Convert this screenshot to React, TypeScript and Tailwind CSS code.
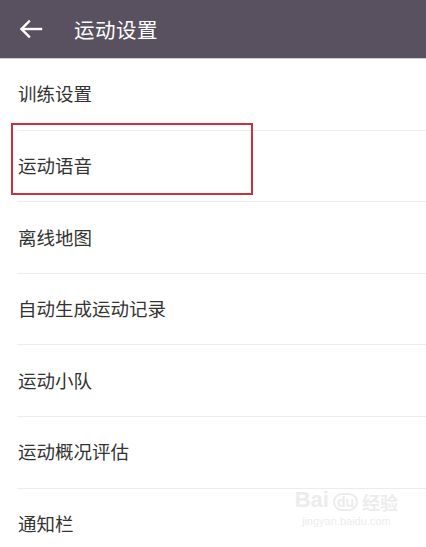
const items = ['训练设置', '运动语音', '离线地图', '自动生成运动记录', '运动小队', '运动概况评估', '通知栏'];

export default function App() {
  return (
    <div className="w-[426px] h-[547px] overflow-hidden bg-white" style={{ fontFamily: '"Noto Sans CJK SC", "Noto Sans", sans-serif' }}>
      {/* Header */}
      <div className="h-[59px] bg-[#595160] flex items-center border-b border-[#cfcdd2]">
        <svg width="24" height="20" viewBox="0 0 24 20" className="ml-[19px]" fill="none" stroke="white" strokeWidth="2.4" strokeLinecap="square">
          <path d="M22 10H3" />
          <path d="M10 2.5L2.5 10L10 17.5" />
        </svg>
        <span className="ml-[31px] text-[20.5px] text-white tracking-[0.5px]">运动设置</span>
      </div>

      {/* List */}
      <div className="relative">
        {items.map((label, i) => (
          <div key={label} className="relative">
            {i > 0 && <div className="ml-[17px] h-px bg-[#ececec]" />}
            <div className="h-[70.6px] flex items-center pl-[18px] text-[18.5px] text-[#333333]">{label}</div>
            {i === 1 && (
              <div className="absolute left-[11px] top-[-7px] w-[242px] h-[72px] border-2 border-[#c9323c]" />
            )}
          </div>
        ))}

        {/* watermark */}
        <div className="absolute right-[28px] top-[430px] flex flex-col items-center text-[#ececec] pointer-events-none">
          <div className="flex items-end text-[22px] font-bold leading-none" style={{ fontFamily: '"Liberation Sans", sans-serif' }}>
            <span>Bai</span>
            <span className="ml-1 text-[14px] rounded-full border-2 border-[#ececec] px-[2px]">du</span>
            <span className="ml-1 text-[18px]" style={{ fontFamily: '"Noto Sans CJK SC", sans-serif' }}>经验</span>
          </div>
          <span className="text-[11px] mt-[2px]" style={{ fontFamily: '"Liberation Sans", sans-serif' }}>jingyan.baidu.com</span>
        </div>
      </div>
    </div>
  );
}
